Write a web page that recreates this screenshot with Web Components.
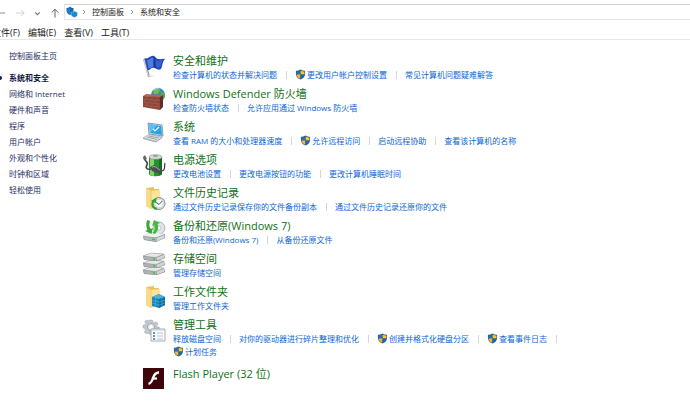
<!DOCTYPE html>
<html lang="zh-CN">
<head>
<meta charset="utf-8">
<title>系统和安全</title>
<style>
html, body { margin: 0; background: #fff; }
body { font-family: "Open Sans", "Noto Sans CJK SC", sans-serif; font-size: 8px; color: #222; overflow-x: hidden; }
</style>
</head>
<body>
<cp-window>
  <cp-address slot="address"></cp-address>
  <cp-menu slot="menu"></cp-menu>
  <cp-sidebar slot="sidebar"></cp-sidebar>

  <cp-category icon="flag" heading="安全和维护">
    <cp-link>检查计算机的状态并解决问题</cp-link><cp-link shield>更改用户帐户控制设置</cp-link><cp-link>常见计算机问题疑难解答</cp-link>
  </cp-category>
  <cp-category icon="firewall" heading="Windows Defender 防火墙">
    <cp-link>检查防火墙状态</cp-link><cp-link>允许应用通过 Windows 防火墙</cp-link>
  </cp-category>
  <cp-category icon="system" heading="系统">
    <cp-link>查看 RAM 的大小和处理器速度</cp-link><cp-link shield>允许远程访问</cp-link><cp-link>启动远程协助</cp-link><cp-link>查看该计算机的名称</cp-link>
  </cp-category>
  <cp-category icon="power" heading="电源选项">
    <cp-link>更改电池设置</cp-link><cp-link>更改电源按钮的功能</cp-link><cp-link>更改计算机睡眠时间</cp-link>
  </cp-category>
  <cp-category icon="history" heading="文件历史记录">
    <cp-link>通过文件历史记录保存你的文件备份副本</cp-link><cp-link>通过文件历史记录还原你的文件</cp-link>
  </cp-category>
  <cp-category icon="backup" heading="备份和还原(Windows 7)">
    <cp-link>备份和还原(Windows 7)</cp-link><cp-link>从备份还原文件</cp-link>
  </cp-category>
  <cp-category icon="storage" heading="存储空间">
    <cp-link>管理存储空间</cp-link>
  </cp-category>
  <cp-category icon="workfolder" heading="工作文件夹">
    <cp-link>管理工作文件夹</cp-link>
  </cp-category>
  <cp-category icon="tools" heading="管理工具">
    <cp-link>释放磁盘空间</cp-link><cp-link>对你的驱动器进行碎片整理和优化</cp-link><cp-link shield>创建并格式化硬盘分区</cp-link><cp-link shield>查看事件日志</cp-link><cp-link shield>计划任务</cp-link>
  </cp-category>
  <cp-category icon="flash" heading="Flash Player (32 位)" single></cp-category>
</cp-window>

<script>
const drive = (y) => `
  <path d="M1 ${y + 3} L9 ${y} L22 ${y + 1} L23 ${y + 5} L15 ${y + 8} L2 ${y + 7}Z" fill="#777b7b"/>
  <path d="M1 ${y + 3} L9 ${y} L22 ${y + 1} L14 ${y + 4.4}Z" fill="#e6e8e8" stroke="#a5a8a8" stroke-width=".5"/>
  <path d="M1.3 ${y + 3.4} L14 ${y + 4.8} V${y + 7.7} L2 ${y + 6.6}Z" fill="#aeb2b2"/>
  <path d="M14.4 ${y + 4.8} L22.4 ${y + 1.5} V${y + 4.8} L14.6 ${y + 7.8}Z" fill="#d2d5d5"/>
  <path d="M11 ${y + 6} h2" stroke="#35c642" stroke-width="1.4"/>`;
const folder = `
  <path d="M4 2 L12 1 V3 L17 3 V22 L4 20Z" fill="#e9c561"/>
  <path d="M4 2 L9 5 V23 L4 20.5Z" fill="#f9dc8a"/>
  <path d="M9 5 L18 4 V21 L9 23Z" fill="#fbe39c"/>
  <path d="M9 5 V23" stroke="#e3bd58" stroke-width=".6"/>`;

const ICONS = {
  flag: `
    <path d="M2 5 L7 23" stroke="#8b9099" stroke-width="2"/><path d="M1.7 5 L6.4 22.5" stroke="#e8ebef" stroke-width=".8"/>
    <path d="M2.5 4 C6 6 8 1 12 2 C14 3 14 5 17 5 C19 6 21 4 23 5 C20 8 21 11 19 15 C16 17 14 14 12 14 C9 13 8 17 5.5 16Z" fill="#2648b8"/>
    <path d="M5 6 C8 6 9 3 12 4 C10 7 12 10 11 13 C9 13 8 15 6.5 14Z" fill="#4f7be2"/>
    <path d="M14 6 C17 8 18 7 21 6 C19 8 19 11 18 13 C16 14 15 13 14 12Z" fill="#3760cd"/>
    <path d="M12 3 C13 7 12 10 13 14" stroke="#17308d" fill="none"/>
    <path d="M6 21 L13 22 L8 23Z" fill="#d9dbdf"/>`,
  firewall: `
    <circle cx="16" cy="8" r="7" fill="#3387ca"/>
    <path d="M11 4 C13 1 17 1 18 3 L16 7 L12 7Z" fill="#73bd4c"/><path d="M19 4 L22 6 L23 10 L20 12 L18 9Z" fill="#5bac40"/>
    <path d="M12 3 Q14 1 17 1" stroke="#a7dcfa" fill="none"/>
    <path d="M1 9 L4 7 L20 8 L18 11Z" fill="#b06a55"/>
    <path d="M1 9 L18 10 V23 L1 20Z" fill="#8a4537"/><path d="M18 10 L21 8 V20 L18 23Z" fill="#602e28"/>
    <path d="M1 12 L18 13.5 M1 15 L18 17 M1 18 L18 20 M5 9 V12.2 M10 9.5 V12.7 M15 10 V13 M3 12 V15 M8 13 V15.7 M13 13 V16.4 M5 15.5 V18.5 M10 16 V19 M15 17 V19.6 M8 19 V21.5 M13 20 V22" stroke="#b06c5a" stroke-width=".5"/>`,
  system: `
    <path d="M6 3 L20 5 L21 16 L7 14Z" fill="#dcecf5" stroke="#6a8393" stroke-width=".8"/>
    <path d="M7 4 L19.3 6 L20 15 L8 13Z" fill="#27a2e6"/>
    <path d="M7 4 L15 5.4 L8 13Z" fill="#5bc1f4"/>
    <path d="M11 9 L13 11 L17 7" stroke="#fff" stroke-width="1.2" fill="none"/>
    <path d="M1 18 L7 14.5 L20.5 17 L14 21.5Z" fill="#dde1e4" stroke="#91999f" stroke-width=".6"/>
    <path d="M5 17 L15 19.4 M7 16 L17 18" stroke="#8e969b" stroke-width=".8"/>
    <path d="M1 18.5 L14 22 L20 17.7" stroke="#a7aeb3" fill="none"/>`,
  power: `
    <path d="M7 4 V21 C7 24 20 24 20 21 V4Z" fill="#27902e"/>
    <path d="M8 5 V22 Q10 23 12 23 V5Z" fill="#7fd56b"/><path d="M17 5 V22 L20 21 V4Z" fill="#176d25"/>
    <ellipse cx="13.5" cy="4" rx="6.5" ry="2.3" fill="#d9ddd9" stroke="#7e8b7e" stroke-width=".6"/>
    <ellipse cx="13.5" cy="3" rx="2.5" ry="1.2" fill="#9ca89c"/>
    <path d="M2 4 C1 8 7 8 5 12 C3 15 5 17 9 16" stroke="#41464a" stroke-width="1.6" fill="none"/>
    <path d="M1 4 L3 2 L5 6 L3 7Z" fill="#64696c"/>
    <path d="M8 14 L12 12 L19 16 L20 19 L15 20 L10 18Z" fill="#4c4f52"/><path d="M10 14 L13 13.5 L18 17" stroke="#a3a6a8" fill="none"/>
    <path d="M20 18 C24 17 22 13 23 10" stroke="#363a3d" stroke-width="1.2" fill="none"/>`,
  history: folder + `
    <circle cx="17" cy="17.5" r="6" fill="#dfe3e4" stroke="#878e92"/>
    <circle cx="17" cy="17.5" r="4.3" fill="#f6f8f8" stroke="#b3babc" stroke-width=".5"/>
    <path d="M13.6 16 L17 18.5 L20.3 15" stroke="#4c565a" fill="none"/>
    <path d="M15 23 C10 22 9 18 12 14" stroke="#2ea52f" stroke-width="2" fill="none"/><path d="M9 15 L14.5 11.5 L14 17Z" fill="#2ea52f"/>`,
  backup: `
    <circle cx="17" cy="9" r="6" fill="#e0e5e8" stroke="#8f989d" stroke-width=".7"/><circle cx="17" cy="9" r="2" fill="#fff" stroke="#9da6ab" stroke-width=".6"/>
    <path d="M1 17 L9 13 L23 15 V19 L14 23 L2 21Z" fill="#85898b"/>
    <path d="M1 17 L9 13 L23 15 L14 18.5Z" fill="#eef0f1"/><path d="M1 17.5 L14 19 V22.6 L2 20.5Z" fill="#b3b7b9"/><path d="M14.5 19 L22.5 15.8 V18.8 L14.5 22.4Z" fill="#d7dadb"/>
    <path d="M10 20.5 h3" stroke="#3bbc45" stroke-width="1.3"/>
    <path d="M5 1 L8 2 C7 6 7 8 9 10 L11 9 L9.5 15 L3 12 L5.5 11 C4 8 4 4 5 1Z" fill="#36aa34"/>
    <path d="M13 15 L10.5 14 C13 11 13 9 12 6 L10 7 L12 1 L18 4 L15.5 5 C17 9 16 12 13 15Z" fill="#44ba3b"/>`,
  storage: drive(15) + drive(8) + drive(1),
  workfolder: folder + `
    <path d="M10 12 L17 9 L23 12 V20 L17 23 L10 21Z" fill="#1686bd"/>
    <path d="M10 12 L17 9 L23 12 L17 14Z" fill="#4fb0dc"/><path d="M17 14 L23 12 V20 L17 23Z" fill="#0e6c9e"/>
    <path d="M10 15 L17 17 L23 15 M10 18 L17 20 L23 18 M13.5 13 V22 M20 13 V22" stroke="#5db8de" stroke-width=".5" fill="none"/>`,
  tools: `
    <g transform="translate(9 9)"><path d="M-1.6-8 h3.2 l.5 2.2 2 1 2-1.2 2.1 2.4-1.3 1.8.6 2L9.5 0v3l-2.2.4-1 2L7.4 7.2 5 9.2l-2-1.3-1 .4H-1.5L-3.5 7l-2 1-2.2-2.2 1.2-2-.7-2L-9.2 1v-3l2.3-.5.8-1.8-1.3-2L-5-8l1.8 1Z" transform="scale(.86)" fill="#c3c9cf" stroke="#98a0a8" stroke-width=".6"/>
    <circle r="3.6" fill="#e2e6ea" stroke="#89939b" stroke-width=".7"/><circle r="1.7" fill="#fff"/></g>
    <path d="M9 11 H23 V23 H9Z" fill="#fafbfc" stroke="#929ba4" stroke-width=".8"/><path d="M9.4 12 H22.6" stroke="#c7ced6"/>
    <path d="M11 15 h2 M11 18 h2 M11 21 h2" stroke="#2c79c9" stroke-width="1.3"/><path d="M15 15 h6 M15 18 h6 M15 21 h6" stroke="#a8b2bd" stroke-width=".8"/>`,
  flash: `
    <rect x="1" y="1" width="21" height="21" fill="#3d0509"/>
    <path d="M17 5.5 C13 5.3 12 8.2 11 11 C10 14.3 9 16.3 6.5 16.7" fill="none" stroke="#fff" stroke-width="2.4"/><path d="M10.5 11.5 H15" stroke="#fff" stroke-width="2.2"/>`,
  shield: `
    <path d="M12 1 C9 3 5 4 2 4 V12 C3 18 7 21 12 23 C17 21 21 18 22 12 V4 C19 4 15 3 12 1Z" fill="#315d86"/>
    <path d="M11.5 3 V12 H3.5 V5.5 C7 5.4 9 4.5 11.5 3Z" fill="#236fbd"/><path d="M12.5 3 C15 4.5 17 5.4 20.5 5.5 V12 H12.5Z" fill="#ffc72e"/>
    <path d="M3.5 12 H11.5 V21.3 C7 19.5 4.2 17 3.5 12Z" fill="#f7b928"/><path d="M12.5 12 H20.5 C19.8 17 17 19.5 12.5 21.3Z" fill="#1768b5"/>`,
  security: `
    <path d="M8 1 C6 3 3 4 1 4 V10 C2 15 5 17 8 18 C12 17 15 14 15 10 V4 C12 4 10 3 8 1Z" fill="#0d67b2"/>
    <path d="M8 3 V16 C5 15 3 13 2.5 10 V5.5 C5 5.4 6.5 4.5 8 3Z" fill="#1c7fc8"/>
    <path d="M17 10 C15 12 12 12.5 10 12.5 V17 C11 21 14 22 17 23 C20 22 23 20 23 17 V12.5 C21 12.5 19 12 17 10Z" fill="#168bd3" stroke="#d8effc" stroke-width=".8"/>`,
  back: `<path d="M22 12 H2 M9 5 L2 12 L9 19" fill="none" stroke="#777" stroke-width="2"/>`,
  forward: `<path d="M2 12 H22 M15 5 L22 12 L15 19" fill="none" stroke="#c9c9c9" stroke-width="2"/>`,
  up: `<path d="M12 23 V3 M4 11 L12 3 L20 11" fill="none" stroke="#666" stroke-width="2.4"/>`,
  down: `<path d="M4 8 L12 16 L20 8" fill="none" stroke="#777" stroke-width="4"/>`,
  next: `<path d="M8 4 L16 12 L8 20" fill="none" stroke="#666" stroke-width="3"/>`
};

const define = (name, render) => customElements.define(name, class extends HTMLElement {
  constructor() { super(); this.attachShadow({ mode: "open" }); }
  connectedCallback() { this.shadowRoot.innerHTML = render(this); }
});

define("cp-icon", (el) => `
  <style>:host { display: block; flex: none; width: 24px; height: 24px; } svg { display: block; width: 100%; height: 100%; }</style>
  <svg viewBox="0 0 24 24" aria-hidden="true">${ICONS[el.getAttribute("name")]}</svg>`);

define("cp-window", () => `
  <style>
    :host { display: block; }
    .body { display: grid; grid-template-columns: 142px minmax(0, 1fr); padding-top: 14px; }
    main { display: flex; flex-direction: column; gap: 6px; padding-right: 92px; }
  </style>
  <slot name="address"></slot>
  <slot name="menu"></slot>
  <div class="body"><slot name="sidebar"></slot><main><slot></slot></main></div>`);

define("cp-address", () => `
  <style>
    :host { display: grid; grid-template-columns: 64px minmax(0, 1fr); padding-top: 4px; }
    .nav { display: flex; align-items: center; justify-content: space-between; padding: 2px 4px 0 0; }
    button { border: 0; padding: 0; background: none; display: block; }
    .back { margin-left: -4px; }
    .nav cp-icon { width: 10px; height: 10px; }
    .nav .small { width: 7px; height: 7px; }
    .bar { box-sizing: border-box; height: 16px; display: flex; align-items: center; gap: 5px; padding-left: 1px; border: solid #e5e5e5; border-width: 1px 0 1px 1px; border-top-color: #d2d2d2; line-height: 14px; }
    .bar .pc { width: 12px; height: 12px; margin-right: -2px; }
    .bar .sep { width: 6px; height: 6px; }
    a { color: #222; text-decoration: none; font-size: 8px; }
  </style>
  <div class="nav">
    <button class="back" aria-label="后退"><cp-icon name="back"></cp-icon></button>
    <button aria-label="前进"><cp-icon name="forward"></cp-icon></button>
    <button aria-label="最近位置"><cp-icon class="small" name="down"></cp-icon></button>
    <button aria-label="上移"><cp-icon name="up"></cp-icon></button>
  </div>
  <div class="bar">
    <cp-icon class="pc" name="security"></cp-icon><cp-icon class="sep" name="next"></cp-icon>
    <a href="#">控制面板</a><cp-icon class="sep" name="next"></cp-icon><a href="#">系统和安全</a>
  </div>`);

define("cp-menu", () => `
  <style>
    :host { display: flex; gap: 8px; height: 19px; align-items: center; border-bottom: 1px solid #e8e8e8; margin-left: -8px; font-size: 9px; }
    button { font: inherit; color: #222; border: 0; padding: 6px 0 0; background: none; line-height: 13px; white-space: nowrap; }
  </style>
  <button>文件(F)</button><button>编辑(E)</button><button>查看(V)</button><button>工具(T)</button>`);

define("cp-sidebar", () => `
  <style>
    :host { display: block; padding-left: 9px; }
    a { display: block; line-height: 16px; color: #1e2f66; text-decoration: none; }
    .home { margin: -6px 0 6px; }
    .current { position: relative; font-weight: 700; color: #101c4a; }
    .current::before { content: ""; position: absolute; left: -11px; top: 6px; width: 4px; height: 4px; border-radius: 2px; background: #101c4a; }
  </style>
  <nav>
    <a class="home" href="#">控制面板主页</a>
    <a class="current" href="#" aria-current="page">系统和安全</a>
    <a href="#">网络和 Internet</a><a href="#">硬件和声音</a><a href="#">程序</a><a href="#">用户帐户</a>
    <a href="#">外观和个性化</a><a href="#">时钟和区域</a><a href="#">轻松使用</a>
  </nav>`);

define("cp-category", (el) => `
  <style>
    :host { display: grid; grid-template-columns: 24px minmax(0, 1fr); column-gap: 7px; min-height: 27px; }
    :host([single]) { padding-top: 3px; }
    h2 { margin: 0; font-size: 11px; line-height: 14px; font-weight: 400; }
    h2 a { color: #137016; text-decoration: none; }
    .links { display: flex; flex-wrap: wrap; }
  </style>
  <cp-icon name="${el.getAttribute("icon")}"></cp-icon>
  <div><h2><a href="#">${el.getAttribute("heading")}</a></h2><div class="links"><slot></slot></div></div>`);

define("cp-link", (el) => `
  <style>
    :host { display: flex; align-items: center; line-height: 13px; white-space: nowrap; }
    :host(:not(:last-child))::after { content: ""; width: 1px; height: 8px; margin: 0 8px 0 9px; background: #d4d4d4; }
    a { display: flex; align-items: center; gap: 1px; color: #0b66d4; text-decoration: none; }
    cp-icon { width: 11px; height: 11px; }
  </style>
  <a href="#">${el.hasAttribute("shield") ? '<cp-icon name="shield"></cp-icon>' : ""}<span><slot></slot></span></a>`);
</script>
</body>
</html>
